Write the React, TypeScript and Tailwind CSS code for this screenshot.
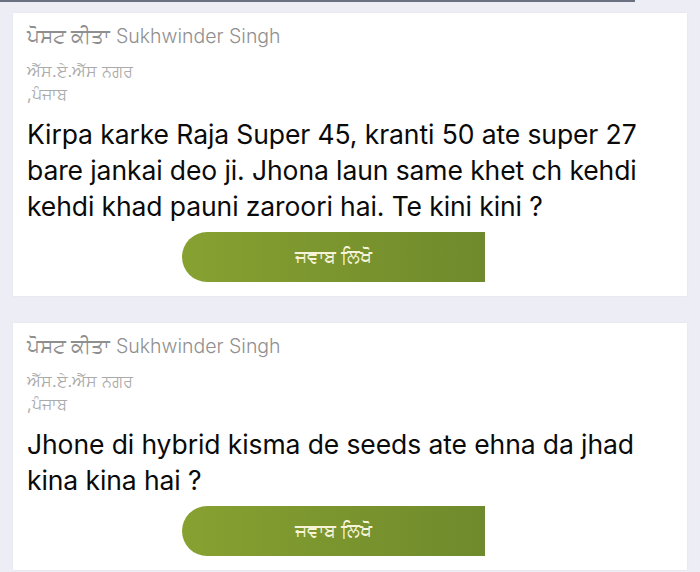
const posts = [
  {
    author: "Sukhwinder Singh",
    city: "ਐੱਸ.ਏ.ਐੱਸ ਨਗਰ",
    state: ",ਪੰਜਾਬ",
    question:
      "Kirpa karke Raja Super 45, kranti 50 ate super 27 bare jankai deo ji. Jhona laun same khet ch kehdi kehdi khad pauni zaroori hai. Te kini kini ?",
  },
  {
    author: "Sukhwinder Singh",
    city: "ਐੱਸ.ਏ.ਐੱਸ ਨਗਰ",
    state: ",ਪੰਜਾਬ",
    question: "Jhone di hybrid kisma de seeds ate ehna da jhad kina kina hai ?",
  },
]

function PostCard({ post }: { post: (typeof posts)[number] }) {
  return (
    <div className="bg-white mx-[13px] px-[14px] pt-[10px] pb-[14px] shadow-[0_0_2px_rgba(0,0,0,0.06)]">
      <div className="text-[19.5px] leading-[26px] font-light text-[#8f8f8f]">
        ਪੋਸਟ ਕੀਤਾ {post.author}
      </div>
      <div className="mt-[11px] text-[16px] leading-[23px] text-[#ababab]">
        <div>{post.city}</div>
        <div>{post.state}</div>
      </div>
      <p className="mt-[10px] pr-4 text-[26.5px] leading-[36px] tracking-[-0.1px] text-[#0a0a0a]">
        {post.question}
      </p>
      <div className="mt-[8px] flex justify-center">
        <button
          type="button"
          className="ml-[-33px] h-[50px] w-[303px] rounded-l-[25px] bg-gradient-to-r from-[#87a131] to-[#6f8a2c] text-[19px] text-[#f6f3d8]"
        >
          ਜਵਾਬ ਲਿਖੋ
        </button>
      </div>
    </div>
  )
}

export default function App() {
  return (
    <div
      className="h-[572px] overflow-hidden bg-[#ededf5]"
      style={{ fontFamily: 'Inter, "Noto Sans", "Liberation Sans", sans-serif' }}
    >
      <div className="h-[2px] w-[635px] bg-[#6b7180]" />
      <div className="flex flex-col gap-[27px] pt-[11px]">
        {posts.map((post, i) => (
          <PostCard key={i} post={post} />
        ))}
      </div>
    </div>
  )
}
